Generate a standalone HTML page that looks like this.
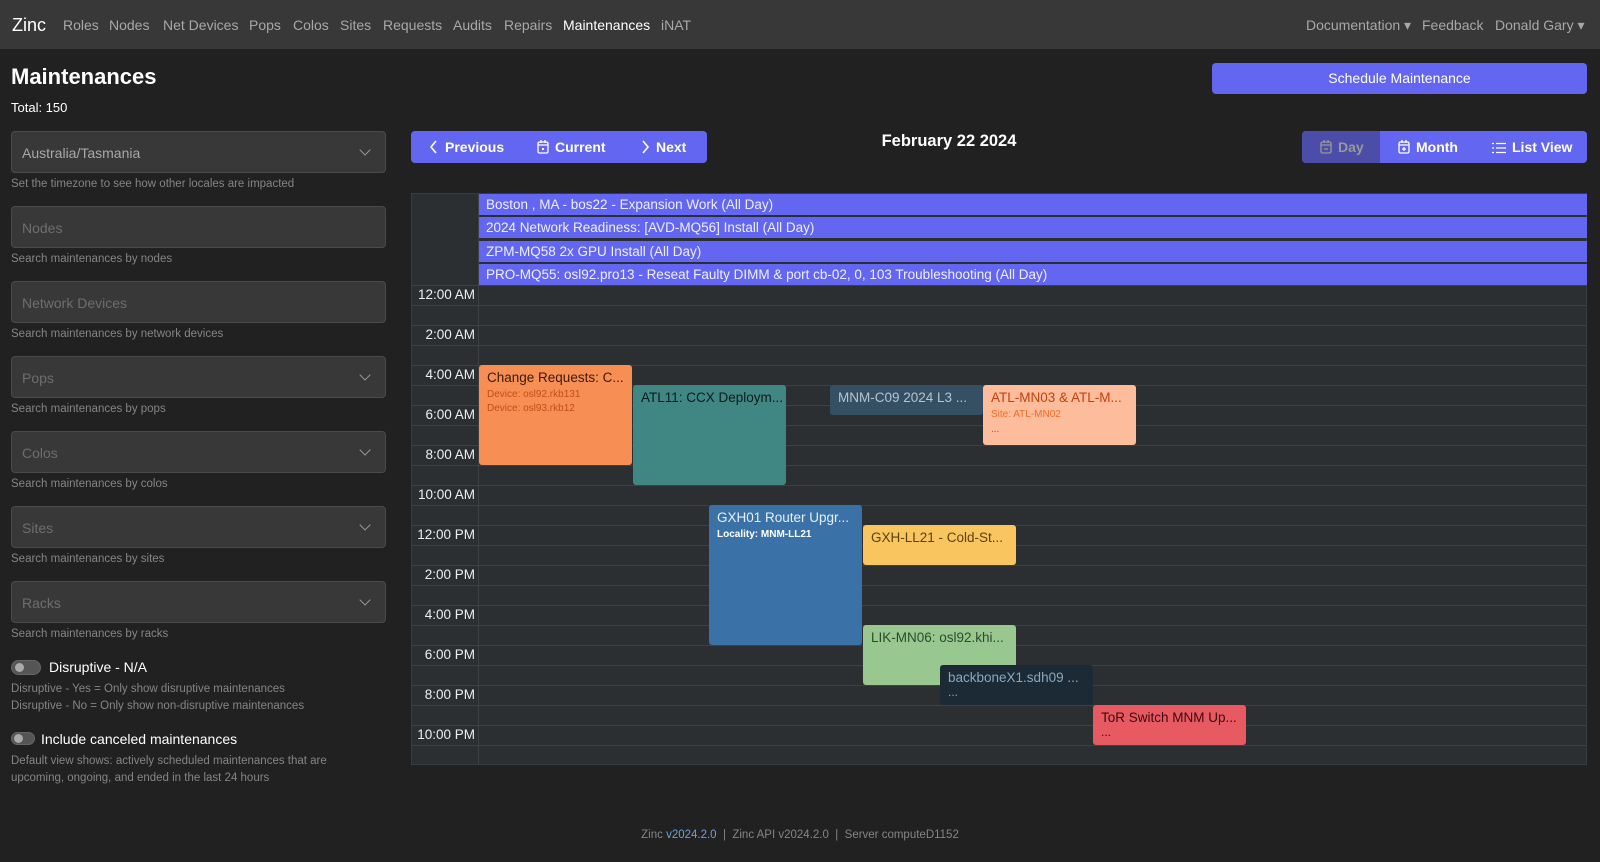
<!DOCTYPE html>
<html><head><meta charset="utf-8"><style>
*{box-sizing:border-box;margin:0;padding:0}
body{width:1600px;height:862px;background:#212121;font-family:"Liberation Sans",sans-serif;color:#ddd;position:relative;overflow:hidden}
.nav{position:absolute;left:0;top:0;width:1600px;height:49px;background:#383838}
.nav span{position:absolute;top:17px;font-size:14px;color:#a8a8a8}
.a{position:absolute}
.inp{position:absolute;left:11px;width:375px;height:42px;background:#383838;border:1px solid #4a4a4a;border-radius:4px;font-size:14px;color:#6e6e6e;padding:13px 10px}
.inp.sel{color:#a8a8a8}
.chev{position:absolute;right:16px;top:14px;width:8px;height:8px;border-right:1.3px solid #999;border-bottom:1.3px solid #999;transform:rotate(45deg)}
.help{position:absolute;left:11px;font-size:11.5px;color:#858585}
.btn{position:absolute;background:#6366f1;border-radius:4px;color:#fff;font-weight:bold;font-size:14px}
.btn svg{vertical-align:-2px;margin-right:6px}
.ad{position:absolute;left:479px;width:1108px;height:21px;background:#6366f1;color:#eef;font-size:13.5px;padding:3px 7px}
.hr{position:absolute;left:411px;width:1176px;height:1px;background:#3c4143}
.tl{position:absolute;left:411px;width:64px;text-align:right;font-size:13.5px;color:#eee}
.ev{position:absolute;border-radius:3px;padding:5px 8px;font-size:13.5px;overflow:hidden;white-space:nowrap}
.ev small{display:block;font-size:10px;margin-top:4px}
</style></head><body>
<div class="nav">
<span style="left:12px;top:15px;font-size:18px;color:#fff">Zinc</span>
<span style="left:63px">Roles</span><span style="left:109px">Nodes</span><span style="left:163px">Net Devices</span>
<span style="left:249px">Pops</span><span style="left:293px">Colos</span><span style="left:340px">Sites</span>
<span style="left:383px">Requests</span><span style="left:453px">Audits</span><span style="left:504px">Repairs</span>
<span style="left:563px;color:#fff">Maintenances</span><span style="left:661px">iNAT</span>
<span style="left:1306px">Documentation ▾</span><span style="left:1422px">Feedback</span><span style="left:1495px">Donald Gary ▾</span>
</div>
<div class="a" style="left:11px;top:64px;font-size:22px;font-weight:bold;color:#fff">Maintenances</div>
<div class="a" style="left:11px;top:100px;font-size:13px;color:#fff">Total: 150</div>

<div class="inp sel" style="top:131px">Australia/Tasmania<div class="chev"></div></div>
<div class="help" style="top:178px">Set the timezone to see how other locales are impacted</div>
<div class="inp" style="top:206px">Nodes</div>
<div class="help" style="top:253px">Search maintenances by nodes</div>
<div class="inp" style="top:281px">Network Devices</div>
<div class="help" style="top:328px">Search maintenances by network devices</div>
<div class="inp" style="top:356px">Pops<div class="chev"></div></div>
<div class="help" style="top:403px">Search maintenances by pops</div>
<div class="inp" style="top:431px">Colos<div class="chev"></div></div>
<div class="help" style="top:478px">Search maintenances by colos</div>
<div class="inp" style="top:506px">Sites<div class="chev"></div></div>
<div class="help" style="top:553px">Search maintenances by sites</div>
<div class="inp" style="top:581px">Racks<div class="chev"></div></div>
<div class="help" style="top:628px">Search maintenances by racks</div>
<div class="a" style="left:11px;top:660px;width:30px;height:15px;border-radius:8px;background:#555;border:1px solid #666"><div style="position:absolute;left:3px;top:2px;width:9px;height:9px;border-radius:50%;background:#aaa"></div></div>
<div class="a" style="left:49px;top:659px;font-size:14px;color:#fff">Disruptive - N/A</div>
<div class="help" style="top:683px">Disruptive - Yes = Only show disruptive maintenances</div>
<div class="help" style="top:700px">Disruptive - No = Only show non-disruptive maintenances</div>
<div class="a" style="left:11px;top:732px;width:24px;height:13px;border-radius:7px;background:#555;border:1px solid #666"><div style="position:absolute;left:2px;top:1px;width:9px;height:9px;border-radius:50%;background:#aaa"></div></div>
<div class="a" style="left:41px;top:731px;font-size:14px;color:#fff">Include canceled maintenances</div>
<div class="help" style="top:755px">Default view shows: actively scheduled maintenances that are</div>
<div class="help" style="top:772px">upcoming, ongoing, and ended in the last 24 hours</div>

<div class="btn" style="left:1212px;top:63px;width:375px;height:31px;font-weight:normal;text-align:center;line-height:31px">Schedule Maintenance</div>
<div class="btn" style="left:411px;top:131px;width:296px;height:32px;line-height:32px">
<span class="a" style="left:18px"><svg width="10" height="14" viewBox="0 0 10 14"><path d="M7 1L2 7l5 6" fill="none" stroke="#fff" stroke-width="1.6"/></svg>Previous</span>
<span class="a" style="left:126px"><svg width="12" height="14" viewBox="0 0 12 14"><rect x="1" y="2" width="10" height="11" rx="1.5" fill="none" stroke="#fff" stroke-width="1.3"/><path d="M1 5h10M4 0v3M8 0v3" stroke="#fff" stroke-width="1.3"/><rect x="5" y="8" width="2" height="2" fill="#fff"/></svg>Current</span>
<span class="a" style="left:229px"><svg width="10" height="14" viewBox="0 0 10 14"><path d="M3 1l5 6-5 6" fill="none" stroke="#fff" stroke-width="1.6"/></svg>Next</span></div>
<div class="a" style="left:849px;top:132px;width:200px;text-align:center;font-size:16.5px;font-weight:bold;color:#fff">February 22 2024</div>
<div class="btn" style="left:1302px;top:131px;width:285px;height:32px;line-height:32px">
<div class="a" style="left:0;top:0;width:78px;height:32px;background:#4b4da8;border-radius:4px 0 0 4px;color:#999;padding-left:18px"><svg width="12" height="14" viewBox="0 0 12 14"><rect x="1" y="2" width="10" height="11" rx="1.5" fill="none" stroke="#999" stroke-width="1.3"/><path d="M1 5h10M4 0v3M8 0v3M4 9h4" stroke="#999" stroke-width="1.3"/></svg>Day</div>
<span class="a" style="left:96px"><svg width="12" height="14" viewBox="0 0 12 14"><rect x="1" y="2" width="10" height="11" rx="1.5" fill="none" stroke="#fff" stroke-width="1.3"/><path d="M1 5h10M4 0v3M8 0v3M4 9h4M6 7v4" stroke="#fff" stroke-width="1.3"/></svg>Month</span>
<span class="a" style="left:190px"><svg width="14" height="12" viewBox="0 0 14 12"><path d="M0 1.5h2M4 1.5h10M0 6h2M4 6h10M0 10.5h2M4 10.5h10" stroke="#fff" stroke-width="1.3"/></svg>List View</span></div>

<div class="a" style="left:411px;top:193px;width:1176px;height:572px;background:#2c2f31;border:1px solid #3a3d3f"></div>
<div class="a" style="left:478px;top:193px;width:1px;height:572px;background:#3c4143"></div>
<div class="ad" style="top:194px">Boston , MA - bos22 - Expansion Work (All Day)</div>
<div class="ad" style="top:217px">2024 Network Readiness: [AVD-MQ56] Install (All Day)</div>
<div class="ad" style="top:241px">ZPM-MQ58 2x GPU Install (All Day)</div>
<div class="ad" style="top:264px">PRO-MQ55: osl92.pro13 - Reseat Faulty DIMM &amp; port cb-02, 0, 103 Troubleshooting (All Day)</div>

<div class="hr" style="top:285px"></div><div class="hr" style="top:305px"></div><div class="hr" style="top:325px"></div><div class="hr" style="top:345px"></div><div class="hr" style="top:365px"></div><div class="hr" style="top:385px"></div><div class="hr" style="top:405px"></div><div class="hr" style="top:425px"></div><div class="hr" style="top:445px"></div><div class="hr" style="top:465px"></div><div class="hr" style="top:485px"></div><div class="hr" style="top:505px"></div><div class="hr" style="top:525px"></div><div class="hr" style="top:545px"></div><div class="hr" style="top:565px"></div><div class="hr" style="top:585px"></div><div class="hr" style="top:605px"></div><div class="hr" style="top:625px"></div><div class="hr" style="top:645px"></div><div class="hr" style="top:665px"></div><div class="hr" style="top:685px"></div><div class="hr" style="top:705px"></div><div class="hr" style="top:725px"></div><div class="hr" style="top:745px"></div>
<div class="tl" style="top:287px">12:00 AM</div><div class="tl" style="top:327px">2:00 AM</div><div class="tl" style="top:367px">4:00 AM</div><div class="tl" style="top:407px">6:00 AM</div><div class="tl" style="top:447px">8:00 AM</div><div class="tl" style="top:487px">10:00 AM</div><div class="tl" style="top:527px">12:00 PM</div><div class="tl" style="top:567px">2:00 PM</div><div class="tl" style="top:607px">4:00 PM</div><div class="tl" style="top:647px">6:00 PM</div><div class="tl" style="top:687px">8:00 PM</div><div class="tl" style="top:727px">10:00 PM</div>

<div class="ev" style="left:479px;top:365px;width:153px;height:100px;background:#f78f55;color:#3a1a08">Change Requests: C...<small style="color:#c04d18">Device: osl92.rkb131</small><small style="color:#c04d18;margin-top:3px">Device: osl93.rkb12</small></div>
<div class="ev" style="left:633px;top:385px;width:153px;height:100px;background:#408784;color:#0c1a1a">ATL11: CCX Deploym...</div>
<div class="ev" style="left:830px;top:385px;width:153px;height:30px;background:#354f63;color:#b6c4cf">MNM-C09 2024 L3 ...</div>
<div class="ev" style="left:983px;top:385px;width:153px;height:60px;background:#fdbd9c;color:#c2410c">ATL-MN03 &amp; ATL-M...<small style="color:#f06a2a">Site: ATL-MN02</small><small style="color:#c2410c">...</small></div>
<div class="ev" style="left:709px;top:505px;width:153px;height:140px;background:#3a72a8;color:#e8eef6">GXH01 Router Upgr...<small style="color:#fff;font-weight:bold">Locality: MNM-LL21</small></div>
<div class="ev" style="left:863px;top:525px;width:153px;height:40px;background:#f9c55f;color:#5a4210">GXH-LL21 - Cold-St...</div>
<div class="ev" style="left:863px;top:625px;width:153px;height:60px;background:#98c790;color:#2e4a2b">LIK-MN06: osl92.khi...</div>
<div class="ev" style="left:940px;top:665px;width:153px;height:40px;background:#1b2a34;color:#8aa7c0">backboneX1.sdh09 ...<small style="font-size:12px;margin-top:0">...</small></div>
<div class="ev" style="left:1093px;top:705px;width:153px;height:40px;background:#e85a62;color:#3a0a0e">ToR Switch MNM Up...<small style="font-size:12px;margin-top:0">...</small></div>

<div class="a" style="left:0;top:829px;width:1600px;text-align:center;font-size:11.5px;color:#858585">Zinc <span style="color:#6ea0d8">v2024.2.0</span> &nbsp;|&nbsp; Zinc API v2024.2.0 &nbsp;|&nbsp; Server computeD1152</div>
</body></html>
